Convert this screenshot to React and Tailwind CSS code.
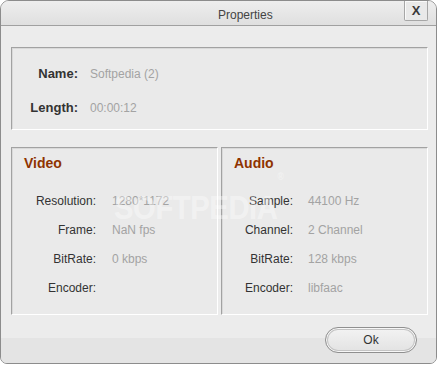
const font = { fontFamily: '"Liberation Sans", Arial, sans-serif' };

const Row = ({ label, value, labelW, gap }) => (
  <div className="flex items-center h-[20px] text-[12px]">
    <span className={`${labelW} text-right text-[#333]`}>{label}</span>
    <span className={`${gap} text-[#a3a3a3]`}>{value}</span>
  </div>
);

const Panel = ({ className = "", children }) => (
  <div
    className={`border border-t-[#a2a2a2] border-l-[#a2a2a2] border-b-white border-r-white shadow-[inset_1px_1px_0_#d9d9d9] bg-[#eaeaea] ${className}`}
  >
    {children}
  </div>
);

export default function App() {
  const video = [
    ["Resolution:", "1280*1172"],
    ["Frame:", "NaN fps"],
    ["BitRate:", "0 kbps"],
    ["Encoder:", ""],
  ];
  const audio = [
    ["Sample:", "44100 Hz"],
    ["Channel:", "2 Channel"],
    ["BitRate:", "128 kbps"],
    ["Encoder:", "libfaac"],
  ];

  return (
    <div className="w-[440px] h-[366px] bg-white relative" style={font}>
      <div className="w-[437px] h-[364px] border border-[#8c8c8c] rounded-t-[9px] rounded-b-[7px] overflow-hidden bg-[#ececec] flex flex-col">
        {/* Title bar */}
        <div className="h-[25px] shrink-0 border-b border-[#a0a0a0] bg-[linear-gradient(to_bottom,#eeeeee,#dfdfdf)] flex items-start">
          <span className="ml-[217px] mt-[7px] text-[12px] leading-[14px] text-[#444]">
            Properties
          </span>
          <button className="ml-auto mr-[8px] w-[24px] h-[21px] -mt-px border border-[#a6a6a6] border-t-[#d0d0d0] rounded-b-[2px] bg-[#e9e9e9] shadow-[inset_1px_1px_0_#fafafa] flex items-center justify-center text-[13px] font-bold text-[#3a3a3a]">
            X
          </button>
        </div>

        {/* Content */}
        <div className="pl-[10px] pt-[21px] flex flex-col">
          <Panel className="w-[417px] h-[83px] pt-[16px] flex flex-col gap-[14px]">
            <div className="flex items-center h-[20px]">
              <span className="w-[66px] text-right text-[13px] font-bold text-[#333]">Name:</span>
              <span className="ml-[12px] text-[12px] text-[#a3a3a3]">Softpedia (2)</span>
            </div>
            <div className="flex items-center h-[20px]">
              <span className="w-[66px] text-right text-[13px] font-bold text-[#333]">Length:</span>
              <span className="ml-[12px] text-[12px] text-[#a3a3a3]">00:00:12</span>
            </div>
          </Panel>

          <div className="mt-[17px] flex gap-[3px]">
            <Panel className="w-[207px] h-[168px] pt-[5px] pl-[12px]">
              <div className="h-[20px] flex items-center text-[14px] font-bold text-[#8f3300]">Video</div>
              <div className="mt-[18px] flex flex-col gap-[9px]">
                {video.map(([l, v]) => (
                  <Row key={l} label={l} value={v} labelW="w-[72px]" gap="ml-[16px]" />
                ))}
              </div>
            </Panel>
            <Panel className="w-[207px] h-[168px] pt-[5px] pl-[12px]">
              <div className="h-[20px] flex items-center text-[14px] font-bold text-[#8f3300]">Audio</div>
              <div className="mt-[18px] flex flex-col gap-[9px]">
                {audio.map(([l, v]) => (
                  <Row key={l} label={l} value={v} labelW="w-[59px]" gap="ml-[15px]" />
                ))}
              </div>
            </Panel>
          </div>
        </div>

        {/* Footer */}
        <div className="flex-1 bg-[linear-gradient(to_bottom,#ececec_0,#ececec_23px,#e4e4e4_23px)] flex justify-end items-start pt-[12px] pr-[19px]">
          <button className="w-[92px] h-[26px] rounded-full border border-[#8f8f8f] shadow-[inset_0_0_0_1px_#f7f7f7,inset_0_0_0_2px_#c4c4c4] bg-[linear-gradient(to_bottom,#f3f3f3,#e2e2e2)] text-[12px] text-[#333]">
            Ok
          </button>
        </div>
      </div>

      {/* watermark */}
      <div className="absolute left-[114px] top-[182px] origin-left scale-x-[0.86] text-[34px] font-bold tracking-[-0.5px] text-white/40 pointer-events-none select-none">
        SOFTPEDIA<sup className="text-[10px] align-top">®</sup>
      </div>
    </div>
  );
}
